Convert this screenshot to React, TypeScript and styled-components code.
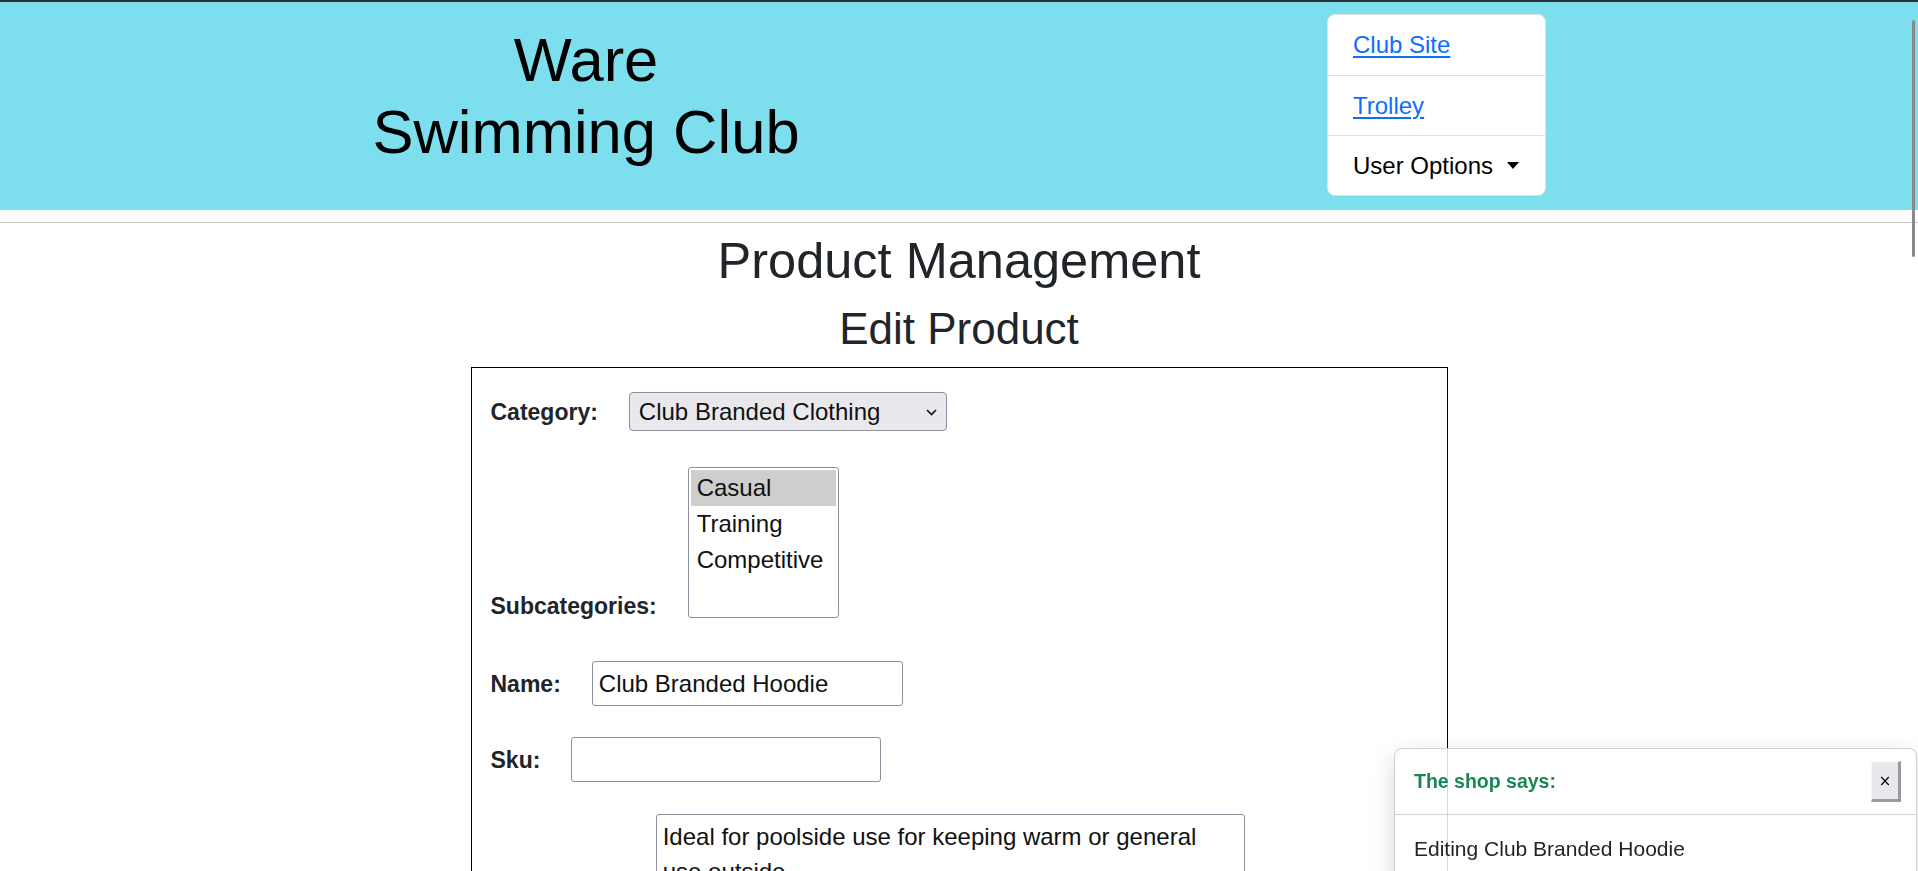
import React from 'react'
import styled, { createGlobalStyle } from 'styled-components'

const GlobalStyle = createGlobalStyle`
  * {
    box-sizing: border-box;
  }
  html, body {
    margin: 0;
    padding: 0;
    overflow: hidden;
  }
  body {
    font-family: "Liberation Sans", Arial, sans-serif;
    color: #212529;
    background: #fff;
  }
`

const Header = styled.header`
  display: grid;
  grid-template-columns: 1172px 219px;
  column-gap: 155px;
  align-items: start;
  height: 210px;
  background: #7ddeee;
  border-top: 2px solid #2f3338;
`

const SiteTitle = styled.h1`
  margin: 22px 0 0;
  font-size: 61.5px;
  line-height: 72px;
  font-weight: 400;
  color: #000;
  text-align: center;
`

const NavCard = styled.nav`
  margin-top: 12px;
  background: #fff;
  border: 1px solid #dee2e6;
  border-radius: 8px;
  overflow: hidden;
`

const NavItem = styled.div`
  display: flex;
  align-items: center;
  height: 60px;
  padding: 0 25px;
  font-size: 24px;
  white-space: nowrap;
  & + & {
    border-top: 1px solid #dee2e6;
  }
`

const NavLink = styled.a`
  color: #0d6efd;
  text-decoration: underline;
  text-underline-offset: 3px;
`

const Toggle = styled.span`
  display: flex;
  align-items: center;
  color: #000;
  &::after {
    content: '';
    margin-left: 14px;
    border-top: 7px solid #000;
    border-left: 6.5px solid transparent;
    border-right: 6.5px solid transparent;
  }
`

const Rule = styled.hr`
  margin: 12px 0 0;
  height: 0;
  border: 0;
  border-top: 1px solid #c6c6c6;
`

const Main = styled.main`
  text-align: center;
`

const PageTitle = styled.h1`
  margin: 8px 0 0;
  font-size: 50.5px;
  line-height: 60px;
  font-weight: 400;
`

const SubTitle = styled.h2`
  margin: 11px 0 0;
  font-size: 44px;
  line-height: 53px;
  font-weight: 400;
`

const FormBox = styled.form`
  width: 977px;
  margin: 12px auto 0;
  padding: 24px 19px 40px;
  border: 1px solid #000;
  text-align: left;
`

const FieldRow = styled.div<{ $top?: number; $align?: string }>`
  display: flex;
  align-items: ${p => p.$align || 'baseline'};
  gap: 31px;
  margin-top: ${p => p.$top || 0}px;
`

const Label = styled.label<{ $drop?: number }>`
  font-size: 23px;
  font-weight: 700;
  color: #212529;
  margin-bottom: ${p => p.$drop || 0}px;
`

const SelectWrap = styled.div`
  position: relative;
  display: inline-flex;
  svg {
    position: absolute;
    right: 10px;
    top: 17px;
    pointer-events: none;
  }
`

const Select = styled.select`
  appearance: none;
  width: 318px;
  height: 39px;
  padding: 0 30px 0 9px;
  background: #e9e9ed;
  border: 1px solid #8f8f9d;
  border-radius: 4px;
  font-family: inherit;
  font-size: 24px;
  color: #111;
`

const ListBox = styled.div`
  width: 151px;
  height: 151px;
  padding: 2px;
  border: 1px solid #8f8f9d;
  border-radius: 3px;
  background: #fff;
`

const ListOption = styled.div<{ $selected?: boolean }>`
  height: 36px;
  padding: 0 6px;
  font-size: 24px;
  line-height: 36px;
  color: #111;
  background: ${p => (p.$selected ? '#cecece' : 'transparent')};
`

const TextInput = styled.input<{ $width: number }>`
  width: ${p => p.$width}px;
  height: 45px;
  padding: 0 6px;
  border: 1px solid #8f8f9d;
  border-radius: 3px;
  font-family: inherit;
  font-size: 24px;
  color: #111;
`

const TextArea = styled.textarea`
  width: 589px;
  height: 150px;
  padding: 4px 30px 4px 6px;
  border: 1px solid #8f8f9d;
  border-radius: 3px;
  font-family: inherit;
  font-size: 24px;
  line-height: 35px;
  color: #111;
  resize: vertical;
`

const Toast = styled.div`
  position: fixed;
  left: 1394px;
  top: 748px;
  width: 523px;
  background: rgba(255, 255, 255, 0.85);
  border: 1px solid rgba(0, 0, 0, 0.175);
  border-radius: 8px;
  box-shadow: 0 8px 24px rgba(0, 0, 0, 0.15);
`

const ToastHeader = styled.div`
  display: flex;
  align-items: center;
  justify-content: space-between;
  height: 66px;
  padding: 0 15px 0 19px;
  border-bottom: 1px solid rgba(0, 0, 0, 0.175);
`

const ToastTitle = styled.strong`
  font-size: 19.5px;
  color: #198754;
`

const CloseButton = styled.button`
  width: 30px;
  height: 41px;
  padding: 0;
  background: #e9e9ed;
  border-style: solid;
  border-width: 1px 3px 3px 1px;
  border-color: #f7f7f7 #9a9a9a #9a9a9a #f7f7f7;
  font-family: "DejaVu Sans", sans-serif;
  font-size: 15px;
  color: #000;
`

const ToastBody = styled.div`
  padding: 19px 19px;
  font-size: 21px;
  line-height: 30px;
  color: #212529;
`

const ScrollThumb = styled.div`
  position: fixed;
  left: 1912px;
  top: 20px;
  width: 3px;
  height: 237px;
  background: #8a8a8a;
  border-radius: 2px;
`

const subcategories = ['Casual', 'Training', 'Competitive']

export default function App() {
  return (
    <>
      <GlobalStyle />
      <Header>
        <SiteTitle>
          Ware
          <br />
          Swimming Club
        </SiteTitle>
        <NavCard>
          <NavItem>
            <NavLink href="#">Club Site</NavLink>
          </NavItem>
          <NavItem>
            <NavLink href="#">Trolley</NavLink>
          </NavItem>
          <NavItem>
            <Toggle>User Options</Toggle>
          </NavItem>
        </NavCard>
      </Header>
      <Rule />
      <Main>
        <PageTitle>Product Management</PageTitle>
        <SubTitle>Edit Product</SubTitle>
        <FormBox onSubmit={e => e.preventDefault()}>
          <FieldRow>
            <Label>Category:</Label>
            <SelectWrap>
              <Select defaultValue="clothing">
                <option value="clothing">Club Branded Clothing</option>
              </Select>
              <svg width="11" height="7" viewBox="0 0 11 7">
                <path d="M1 1l4.5 4.5L10 1" fill="none" stroke="#111" strokeWidth="1.6" />
              </svg>
            </SelectWrap>
          </FieldRow>
          <FieldRow $top={36} $align="flex-end">
            <Label $drop={-2}>Subcategories:</Label>
            <ListBox role="listbox">
              {subcategories.map((s, i) => (
                <ListOption key={s} $selected={i === 0}>
                  {s}
                </ListOption>
              ))}
            </ListBox>
          </FieldRow>
          <FieldRow $top={43}>
            <Label>Name:</Label>
            <TextInput $width={311} defaultValue="Club Branded Hoodie" />
          </FieldRow>
          <FieldRow $top={31}>
            <Label>Sku:</Label>
            <TextInput $width={310} defaultValue="" />
          </FieldRow>
          <FieldRow $top={32} $align="flex-end">
            <Label $drop={-2}>Description:</Label>
            <TextArea defaultValue="Ideal for poolside use for keeping warm or general use outside" />
          </FieldRow>
        </FormBox>
      </Main>
      <Toast role="alert">
        <ToastHeader>
          <ToastTitle>The shop says:</ToastTitle>
          <CloseButton type="button">×</CloseButton>
        </ToastHeader>
        <ToastBody>Editing Club Branded Hoodie</ToastBody>
      </Toast>
      <ScrollThumb />
    </>
  )
}
